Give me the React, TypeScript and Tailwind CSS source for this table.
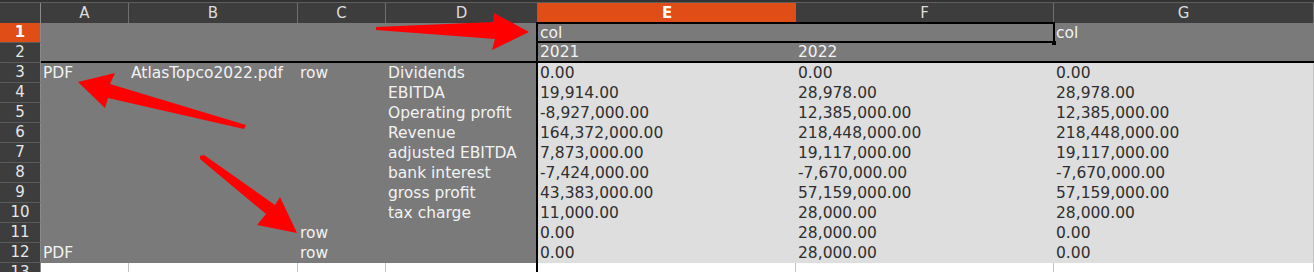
import React from "react";

const cols = [
  { key: "A", w: "w-[88px]" },
  { key: "B", w: "w-[169px]" },
  { key: "C", w: "w-[88px]" },
  { key: "D", w: "w-[152px]" },
  { key: "E", w: "w-[258px]" },
  { key: "F", w: "w-[258px]" },
  { key: "G", w: "w-[260px]" },
];

// rows 3..12: A, B, C, D, E, F, G
const body: string[][] = [
  ["PDF", "AtlasTopco2022.pdf", "row", "Dividends", "0.00", "0.00", "0.00"],
  ["", "", "", "EBITDA", "19,914.00", "28,978.00", "28,978.00"],
  ["", "", "", "Operating profit", "-8,927,000.00", "12,385,000.00", "12,385,000.00"],
  ["", "", "", "Revenue", "164,372,000.00", "218,448,000.00", "218,448,000.00"],
  ["", "", "", "adjusted EBITDA", "7,873,000.00", "19,117,000.00", "19,117,000.00"],
  ["", "", "", "bank interest", "-7,424,000.00", "-7,670,000.00", "-7,670,000.00"],
  ["", "", "", "gross profit", "43,383,000.00", "57,159,000.00", "57,159,000.00"],
  ["", "", "", "tax charge", "11,000.00", "28,000.00", "28,000.00"],
  ["", "", "row", "", "0.00", "28,000.00", "0.00"],
  ["PDF", "", "row", "", "0.00", "28,000.00", "0.00"],
];

function RowHead({ n, active }: { n: number; active?: boolean }) {
  return (
    <div
      className={
        "w-[41px] shrink-0 h-[20px] border-r border-b border-r-[#8a8a8a] border-b-[#5a5a5a] flex items-center justify-center text-[15px] leading-none " +
        (active ? "bg-[#e04d17] text-white font-bold" : "bg-[#3d3d3d] text-[#e6e6e6]")
      }
    >
      {n}
    </div>
  );
}

export default function App() {
  return (
    <div className="relative w-[1314px] h-[272px] overflow-hidden bg-white font-['DejaVu_Sans',sans-serif] text-[15.5px] leading-[20px]">
      {/* top strip */}
      <div className="h-[3px] bg-[#333] border-b border-[#5e5e5e]" />

      {/* column headers */}
      <div className="flex h-[20px]">
        <div className="w-[41px] shrink-0 bg-[#3d3d3d] border-r border-[#8a8a8a]" />
        {cols.map((c) => (
          <div
            key={c.key}
            className={
              c.w +
              " shrink-0 flex items-center justify-center text-[15px] leading-none " +
              (c.key === "E"
                ? "bg-[#e04d17] text-white font-bold"
                : "bg-[#3d3d3d] text-[#dcdcdc] border-r border-[#707070]")
            }
          >
            {c.key}
          </div>
        ))}
      </div>

      {/* row 1 */}
      <div className="flex">
        <RowHead n={1} active />
        <div className="w-[497px] shrink-0 h-[20px] bg-[#7a7a7a] border-r-2 border-black" />
        <div className="w-[516px] shrink-0 h-[20px] bg-[#7a7a7a] text-[#f2f2f2] pl-[2px] relative">
          col
          <div className="absolute -left-[2px] -right-[1px] -top-[1px] bottom-0 border-2 border-black" />
          <div className="absolute -right-[2px] -bottom-[2px] w-[4px] h-[4px] bg-black" />
        </div>
        <div className="w-[260px] shrink-0 h-[20px] bg-[#7a7a7a] text-[#f2f2f2] pl-[2px]">col</div>
      </div>

      {/* row 2 */}
      <div className="flex">
        <RowHead n={2} />
        <div className="w-[497px] shrink-0 h-[20px] bg-[#7a7a7a] border-r-2 border-b-2 border-black" />
        <div className="w-[258px] shrink-0 h-[20px] bg-[#7a7a7a] text-[#f2f2f2] pl-[2px] border-b-2 border-black leading-[18px]">2021</div>
        <div className="w-[258px] shrink-0 h-[20px] bg-[#7a7a7a] text-[#f2f2f2] pl-[2px] border-b-2 border-black leading-[18px]">2022</div>
        <div className="w-[260px] shrink-0 h-[20px] bg-[#7a7a7a] border-b-2 border-black" />
      </div>

      {/* rows 3..12 */}
      {body.map((r, i) => (
        <div key={i} className="flex">
          <RowHead n={i + 3} />
          {cols.map((c, j) => {
            const light = j >= 4;
            return (
              <div
                key={c.key}
                className={
                  c.w +
                  " shrink-0 h-[20px] pl-[2px] whitespace-nowrap overflow-hidden " +
                  (light ? "bg-[#dedede] text-[#2f2f2f] " : "bg-[#7a7a7a] text-[#f2f2f2] ") +
                  (c.key === "D" ? "border-r-2 border-black " : "") +
                  (c.key === "G" ? "border-r border-[#c4c4c4]" : "")
                }
              >
                {r[j]}
              </div>
            );
          })}
        </div>
      ))}

      {/* row 13 */}
      <div className="flex">
        <RowHead n={13} />
        {cols.map((c) => (
          <div
            key={c.key}
            className={
              c.w +
              " shrink-0 h-[20px] bg-white " +
              (c.key === "D" ? "border-r-2 border-black" : "border-r border-[#c4c4c4]")
            }
          />
        ))}
      </div>

      {/* annotation arrows */}
      <svg className="absolute inset-0 pointer-events-none" width="1314" height="272" viewBox="0 0 1314 272">
        <polygon
          fill="#ff0000"
          points="376,27 493,22 494,13 529,32 492,50 495,39 376,30"
        />
        <polygon
          fill="#ff0000"
          points="78,82 115,73 110,84 246,125 244,129 108,98 105,108"
        />
        <polygon
          fill="#ff0000"
          points="200,156 204,155 275,205 280,197 297,233 257,225 266,214 200,159"
        />
      </svg>
    </div>
  );
}
